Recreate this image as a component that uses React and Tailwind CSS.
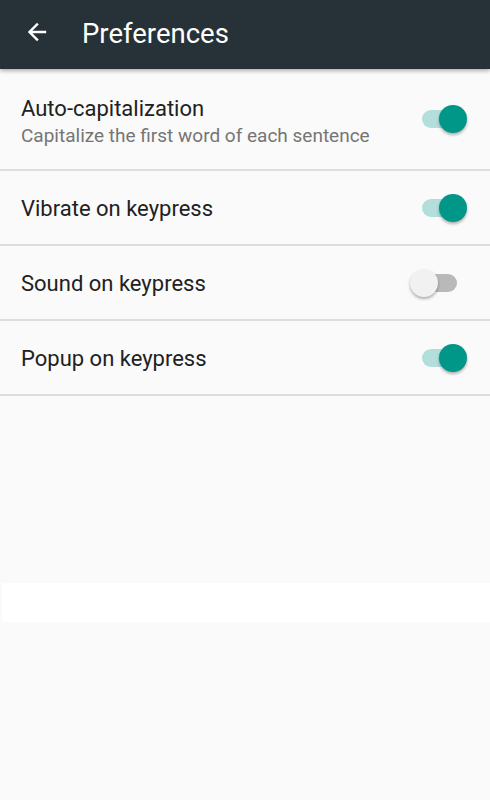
import React from "react";

function Switch({ on }) {
  return (
    <div className="relative w-[57px] h-[28px] shrink-0">
      <div
        className={`absolute left-[12px] top-[5px] w-[35px] h-[18px] rounded-full ${
          on ? "bg-[#b2dfdb]" : "bg-[#b9b9b9]"
        }`}
      />
      <div
        className={`absolute top-0 w-[28px] h-[28px] rounded-full shadow-[0_2px_3px_rgba(0,0,0,0.3)] ${
          on ? "left-[29px] bg-[#009688]" : "left-0 bg-[#f1f1f1]"
        }`}
      />
    </div>
  );
}

function Row({ title, subtitle, on, h, textOffset }) {
  return (
    <div className={`flex items-center justify-between pl-[21px] pr-[23px] ${h}`}>
      <div className={`flex flex-col ${textOffset}`}>
        <div className="text-[22px] leading-[26px] text-[#212121]">{title}</div>
        {subtitle && (
          <div className="text-[19px] leading-[24px] text-[#757575] mt-[2px]">{subtitle}</div>
        )}
      </div>
      <Switch on={on} />
    </div>
  );
}

export default function App() {
  return (
    <div
      className="w-[490px] h-[800px] bg-[#fafafa] flex flex-col overflow-hidden"
      style={{ fontFamily: "Roboto, 'Noto Sans', sans-serif" }}
    >
      <div className="h-[69px] bg-[#263238] flex items-center shrink-0 shadow-[0_2px_4px_rgba(0,0,0,0.3)] relative z-10">
        <svg width="24" height="24" viewBox="0 0 24 24" className="ml-[25px] -mt-[6px]" fill="none">
          <path d="M20 12H5M12 4.5L4.5 12L12 19.5" stroke="#ffffff" strokeWidth="2.4" strokeLinecap="square" />
        </svg>
        <div className="ml-[33px] text-white text-[27.5px] leading-none -mt-[1px]">Preferences</div>
      </div>
      <Row
        title="Auto-capitalization"
        subtitle="Capitalize the first word of each sentence"
        on
        h="h-[100px]"
        textOffset="mt-[5px]"
      />
      <div className="h-[2px] bg-[#dddddd]" />
      <Row title="Vibrate on keypress" on h="h-[73px]" textOffset="mt-[2px]" />
      <div className="h-[2px] bg-[#dddddd]" />
      <Row title="Sound on keypress" on={false} h="h-[73px]" textOffset="mt-[2px]" />
      <div className="h-[2px] bg-[#dddddd]" />
      <Row title="Popup on keypress" on h="h-[73px]" textOffset="mt-[2px]" />
      <div className="h-[2px] bg-[#dddddd]" />
      <div className="h-[187px]" />
      <div className="h-[39px] ml-[2px] bg-white" />
    </div>
  );
}
